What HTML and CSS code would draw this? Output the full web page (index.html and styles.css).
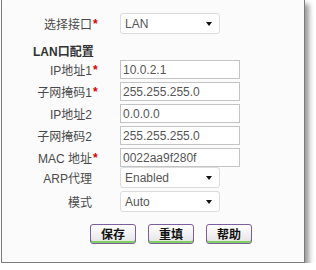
FILE: index.html
```html
<!DOCTYPE html>
<html lang="zh-CN">
<head>
  <meta charset="UTF-8">
  <title>LAN口配置</title>
  <link rel="stylesheet" href="styles.css">
</head>
<body>
  <div class="panel">
    <div class="row row-sel first">
      <label>选择接口</label><span class="req">*</span>
      <div class="sel"><span>LAN</span><i class="arrow"></i></div>
    </div>

    <h4 class="section">LAN口配置</h4>

    <div class="row">
      <label>IP地址1</label><span class="req">*</span>
      <input class="txt" type="text" value="10.0.2.1">
    </div>
    <div class="row">
      <label>子网掩码1</label><span class="req">*</span>
      <input class="txt" type="text" value="255.255.255.0">
    </div>
    <div class="row">
      <label>IP地址2</label><span class="req"></span>
      <input class="txt" type="text" value="0.0.0.0">
    </div>
    <div class="row">
      <label>子网掩码2</label><span class="req"></span>
      <input class="txt" type="text" value="255.255.255.0">
    </div>
    <div class="row last-input">
      <label>MAC 地址</label><span class="req">*</span>
      <input class="txt" type="text" value="0022aa9f280f">
    </div>
    <div class="row row-sel">
      <label>ARP代理</label><span class="req"></span>
      <div class="sel"><span>Enabled</span><i class="arrow"></i></div>
    </div>
    <div class="row row-sel">
      <label>模式</label><span class="req"></span>
      <div class="sel"><span>Auto</span><i class="arrow"></i></div>
    </div>

    <div class="buttons">
      <button>保存</button>
      <button>重填</button>
      <button>帮助</button>
    </div>
  </div>
</body>
</html>
```
FILE: styles.css
```css
body {
  margin: 0;
  background-color: #ffffff;
  font-family: 'Liberation Sans', 'Noto Sans CJK SC', sans-serif;
  font-size: 12px;
  color: #4a4a4a;
}

.panel {
  width: 304px;
  height: 263px;
  margin-left: 1px;
  border: 1px solid #7c7c7c;
  border-top: none;
  background-color: #fafbfa;
  box-shadow: 4px 4px 5px rgba(0, 0, 0, 0.4);
  padding-top: 13px;
  box-sizing: border-box;
}

.row {
  display: grid;
  grid-template-columns: 90px 28px 120px;
  align-items: center;
  height: 19px;
  margin-bottom: 3px;
}

.row-sel {
  height: 21px;
}

.row.first {
  margin-bottom: 11px;
}

.row.last-input {
  margin-bottom: 0;
}

.row label {
  text-align: right;
  white-space: nowrap;
}

.req {
  color: #e00000;
  font-weight: bold;
  padding-left: 1px;
}

.section {
  margin: 0 0 1px 31px;
  height: 14px;
  line-height: 14px;
  font-size: 12px;
  font-weight: bold;
  color: #333;
}

.txt {
  width: 120px;
  height: 19px;
  box-sizing: border-box;
  margin: 0;
  padding: 0 2px;
  border: 1px solid #c4c4c4;
  background-color: #fff;
  font-family: 'Liberation Sans', sans-serif;
  font-size: 12px;
  color: #555;
}

.sel {
  width: 100px;
  height: 21px;
  box-sizing: border-box;
  border: 1px solid #dcdcdc;
  border-radius: 3px;
  background-color: #fff;
  display: flex;
  align-items: center;
  justify-content: space-between;
  padding: 0 7px 0 4px;
  color: #555;
}

.arrow {
  width: 0;
  height: 0;
  border-left: 3px solid transparent;
  border-right: 3px solid transparent;
  border-top: 4px solid #111;
}

.buttons {
  display: flex;
  gap: 12px;
  padding-left: 88px;
  margin-top: 12px;
}

button {
  width: 46px;
  height: 20px;
  padding: 0;
  border: 1px solid #7d5e9c;
  border-radius: 3px;
  background: linear-gradient(#ffffff, #e4e4e4);
  box-shadow: inset 0 -2px 0 #7fd060;
  font-family: 'Noto Sans CJK SC', sans-serif;
  font-size: 12px;
  font-weight: bold;
  color: #111;
  line-height: 16px;
}
```
